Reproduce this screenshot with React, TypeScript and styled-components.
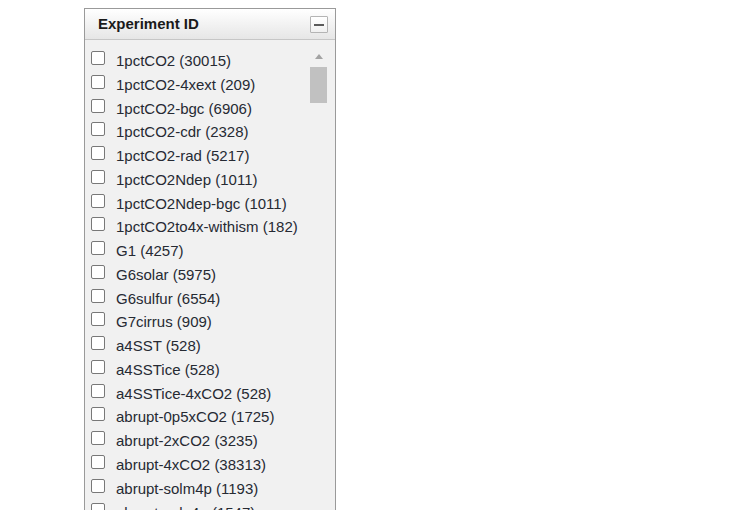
import React from "react";
import styled, { createGlobalStyle } from "styled-components";

const Global = createGlobalStyle`
  html, body { margin: 0; padding: 0; overflow: hidden; background: #fff; }
  body { font-family: Arial, "Liberation Sans", sans-serif; }
`;

const Page = styled.div`
  padding: 8px 0 0 84px;
`;

const Panel = styled.section`
  width: 250px;
  border: 1px solid #9a9a9a;
  background: #f1f1f1;
`;

const Header = styled.header`
  height: 30px;
  display: flex;
  align-items: center;
  justify-content: space-between;
  padding: 0 7px 0 13px;
  border-bottom: 1px solid #c6c6c6;
  background: linear-gradient(#ffffff, #e6e6e6);
`;

const Title = styled.h3`
  margin: 0 0 1px 0;
  font-size: 15px;
  font-weight: bold;
  color: #1a1a1a;
`;

const CollapseButton = styled.button`
  width: 18px;
  height: 17px;
  padding: 0;
  margin-top: 1px;
  border: 1px solid #b4b4b4;
  border-radius: 1px;
  background: linear-gradient(#ffffff, #f0f0f0);
  display: flex;
  align-items: center;
  justify-content: center;
`;

const MinusBar = styled.span`
  width: 10px;
  height: 2px;
  background: #5a5a5a;
`;

const Body = styled.div`
  display: flex;
  height: 520px;
  padding: 8px 8px 0 6px;
  overflow: hidden;
`;

const List = styled.ul`
  flex: 1;
  margin: 0;
  padding: 1px 0 0 0;
  list-style: none;
`;

const Row = styled.li`
  height: 23.78px;
  display: flex;
  align-items: flex-start;
`;

const Check = styled.input.attrs({ type: "checkbox" })`
  appearance: none;
  box-sizing: border-box;
  width: 14px;
  height: 14px;
  margin: 2px 0 0 0;
  border: 1px solid #787878;
  border-radius: 2px;
  background: #fff;
`;

const Label = styled.span`
  margin: 4px 0 0 11px;
  font-size: 15px;
  line-height: 16px;
  color: #262a33;
  white-space: nowrap;
`;

const Scrollbar = styled.div`
  width: 17px;
  flex: none;
  display: flex;
  flex-direction: column;
  align-items: center;
`;

const ArrowButton = styled.div`
  height: 17px;
  width: 17px;
  display: flex;
  align-items: center;
  justify-content: center;
`;

const ArrowUp = styled.span`
  width: 0;
  height: 0;
  border-left: 4.5px solid transparent;
  border-right: 4.5px solid transparent;
  border-bottom: 5px solid #a3a3a3;
`;

const Thumb = styled.div`
  margin-top: 2px;
  width: 17px;
  height: 36px;
  background: #c1c1c1;
`;

const items = [
  "1pctCO2 (30015)",
  "1pctCO2-4xext (209)",
  "1pctCO2-bgc (6906)",
  "1pctCO2-cdr (2328)",
  "1pctCO2-rad (5217)",
  "1pctCO2Ndep (1011)",
  "1pctCO2Ndep-bgc (1011)",
  "1pctCO2to4x-withism (182)",
  "G1 (4257)",
  "G6solar (5975)",
  "G6sulfur (6554)",
  "G7cirrus (909)",
  "a4SST (528)",
  "a4SSTice (528)",
  "a4SSTice-4xCO2 (528)",
  "abrupt-0p5xCO2 (1725)",
  "abrupt-2xCO2 (3235)",
  "abrupt-4xCO2 (38313)",
  "abrupt-solm4p (1193)",
  "abrupt-solp4p (1547)",
  "amip (40518)",
  "amip-4xCO2 (2176)",
];

export default function App() {
  return (
    <>
      <Global />
      <Page>
        <Panel>
          <Header>
            <Title>Experiment ID</Title>
            <CollapseButton aria-label="collapse">
              <MinusBar />
            </CollapseButton>
          </Header>
          <Body>
            <List>
              {items.map((it) => (
                <Row key={it}>
                  <Check />
                  <Label>{it}</Label>
                </Row>
              ))}
            </List>
            <Scrollbar>
              <ArrowButton>
                <ArrowUp />
              </ArrowButton>
              <Thumb />
            </Scrollbar>
          </Body>
        </Panel>
      </Page>
    </>
  );
}
